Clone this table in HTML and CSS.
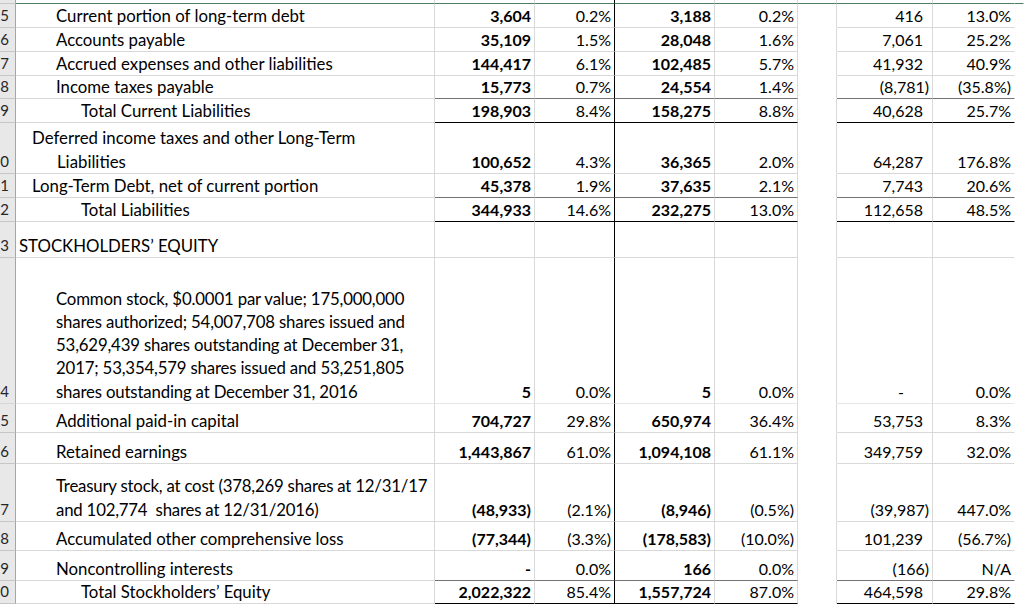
FILE: index.html
```html
<!DOCTYPE html>
<html lang="en">
<head>
<meta charset="utf-8">
<title>Balance Sheet</title>
<link rel="stylesheet" href="styles.css">
</head>
<body>
<div class="sheet">
  <div class="row top">
    <div class="c rh"></div><div class="c lab"></div><div class="c n"></div><div class="c p sep"></div><div class="c n"></div><div class="c p"></div><div class="c gap"></div><div class="c g"></div><div class="c h"></div><div class="c fill"></div>
  </div>
  <div class="row">
    <div class="c rh">5</div><div class="c lab i2">Current portion of long-term debt</div><div class="c n">3,604</div><div class="c p sep">0.2%</div><div class="c n">3,188</div><div class="c p">0.2%</div><div class="c gap"></div><div class="c g pos">416</div><div class="c h">13.0%</div><div class="c fill"></div>
  </div>
  <div class="row">
    <div class="c rh">6</div><div class="c lab i2">Accounts payable</div><div class="c n">35,109</div><div class="c p sep">1.5%</div><div class="c n">28,048</div><div class="c p">1.6%</div><div class="c gap"></div><div class="c g pos">7,061</div><div class="c h">25.2%</div><div class="c fill"></div>
  </div>
  <div class="row">
    <div class="c rh">7</div><div class="c lab i2">Accrued expenses and other liabilities</div><div class="c n">144,417</div><div class="c p sep">6.1%</div><div class="c n">102,485</div><div class="c p">5.7%</div><div class="c gap"></div><div class="c g pos">41,932</div><div class="c h">40.9%</div><div class="c fill"></div>
  </div>
  <div class="row pre">
    <div class="c rh">8</div><div class="c lab i2">Income taxes payable</div><div class="c n">15,773</div><div class="c p sep">0.7%</div><div class="c n">24,554</div><div class="c p">1.4%</div><div class="c gap"></div><div class="c g">(8,781)</div><div class="c h">(35.8%)</div><div class="c fill"></div>
  </div>
  <div class="row total">
    <div class="c rh">9</div><div class="c lab i3">Total Current Liabilities</div><div class="c n">198,903</div><div class="c p sep">8.4%</div><div class="c n">158,275</div><div class="c p">8.8%</div><div class="c gap"></div><div class="c g pos">40,628</div><div class="c h">25.7%</div><div class="c fill"></div>
  </div>
  <div class="row">
    <div class="c rh">0</div><div class="c lab i1"><div class="txt">Deferred income taxes and other Long-Term<br><span class="cont">Liabilities</span></div></div><div class="c n">100,652</div><div class="c p sep">4.3%</div><div class="c n">36,365</div><div class="c p">2.0%</div><div class="c gap"></div><div class="c g pos">64,287</div><div class="c h">176.8%</div><div class="c fill"></div>
  </div>
  <div class="row pre">
    <div class="c rh">1</div><div class="c lab i1">Long-Term Debt, net of current portion</div><div class="c n">45,378</div><div class="c p sep">1.9%</div><div class="c n">37,635</div><div class="c p">2.1%</div><div class="c gap"></div><div class="c g pos">7,743</div><div class="c h">20.6%</div><div class="c fill"></div>
  </div>
  <div class="row total">
    <div class="c rh">2</div><div class="c lab i3">Total Liabilities</div><div class="c n">344,933</div><div class="c p sep">14.6%</div><div class="c n">232,275</div><div class="c p">13.0%</div><div class="c gap"></div><div class="c g pos">112,658</div><div class="c h">48.5%</div><div class="c fill"></div>
  </div>
  <div class="row">
    <div class="c rh">3</div><div class="c lab i0">STOCKHOLDERS’ EQUITY</div><div class="c n"></div><div class="c p sep"></div><div class="c n"></div><div class="c p"></div><div class="c gap"></div><div class="c g"></div><div class="c h"></div><div class="c fill"></div>
  </div>
  <div class="row soft">
    <div class="c rh">4</div><div class="c lab i2"><div class="txt tight">Common stock, $0.0001 par value; 175,000,000<br>shares authorized; 54,007,708 shares issued and<br>53,629,439 shares outstanding at December 31,<br>2017; 53,354,579 shares issued and 53,251,805<br>shares outstanding at December 31, 2016</div></div><div class="c n">5</div><div class="c p sep">0.0%</div><div class="c n">5</div><div class="c p">0.0%</div><div class="c gap"></div><div class="c g dash">-</div><div class="c h">0.0%</div><div class="c fill"></div>
  </div>
  <div class="row">
    <div class="c rh">5</div><div class="c lab i2">Additional paid-in capital</div><div class="c n">704,727</div><div class="c p sep">29.8%</div><div class="c n">650,974</div><div class="c p">36.4%</div><div class="c gap"></div><div class="c g pos">53,753</div><div class="c h">8.3%</div><div class="c fill"></div>
  </div>
  <div class="row">
    <div class="c rh">6</div><div class="c lab i2">Retained earnings</div><div class="c n">1,443,867</div><div class="c p sep">61.0%</div><div class="c n">1,094,108</div><div class="c p">61.1%</div><div class="c gap"></div><div class="c g pos">349,759</div><div class="c h">32.0%</div><div class="c fill"></div>
  </div>
  <div class="row">
    <div class="c rh">7</div><div class="c lab i2"><div class="txt tighter">Treasury stock, at cost (378,269 shares at 12/31/17<br>and 102,774&nbsp; shares at 12/31/2016)</div></div><div class="c n">(48,933)</div><div class="c p sep">(2.1%)</div><div class="c n">(8,946)</div><div class="c p">(0.5%)</div><div class="c gap"></div><div class="c g">(39,987)</div><div class="c h">447.0%</div><div class="c fill"></div>
  </div>
  <div class="row">
    <div class="c rh">8</div><div class="c lab i2">Accumulated other comprehensive loss</div><div class="c n">(77,344)</div><div class="c p sep">(3.3%)</div><div class="c n">(178,583)</div><div class="c p">(10.0%)</div><div class="c gap"></div><div class="c g pos">101,239</div><div class="c h">(56.7%)</div><div class="c fill"></div>
  </div>
  <div class="row pre">
    <div class="c rh">9</div><div class="c lab i2">Noncontrolling interests</div><div class="c n">-</div><div class="c p sep">0.0%</div><div class="c n">166</div><div class="c p">0.0%</div><div class="c gap"></div><div class="c g">(166)</div><div class="c h">N/A</div><div class="c fill"></div>
  </div>
  <div class="row total">
    <div class="c rh">0</div><div class="c lab i3">Total Stockholders’ Equity</div><div class="c n">2,022,322</div><div class="c p sep">85.4%</div><div class="c n">1,557,724</div><div class="c p">87.0%</div><div class="c gap"></div><div class="c g pos">464,598</div><div class="c h">29.8%</div><div class="c fill"></div>
  </div>
</div>
</body>
</html>
```

FILE: styles.css
```css
html, body {
  margin: 0;
  padding: 0;
  background: #ffffff;
  overflow: hidden;
}

.sheet {
  display: grid;
  width: 1024px;
  grid-template-columns: 16px 419px 100px 80px 100px 83px 39px 96px 82px 9px;
  grid-template-rows: 4px 24px 24px 24px 23px 24px 51px 24px 24px 36px 146px 29px 31px 58px 29px 30px 23px;
  font-family: Lato, "Liberation Sans", sans-serif;
  font-size: 16px;
  color: #000000;
}

.row {
  display: contents;
}

.c {
  box-sizing: border-box;
  display: flex;
  align-items: flex-end;
  line-height: 23px;
  white-space: nowrap;
  overflow: hidden;
  border-right: 1px solid #d9d9d9;
  border-bottom: 1px solid #d9d9d9;
}

/* row header */
.rh {
  background: #e8e8e8;
  border-right-color: #a6a6a6;
  border-bottom-color: #c6c6c6;
  justify-content: flex-end;
  padding-right: 6px;
  font-size: 15px;
  color: #262626;
}

/* label column */
.lab {
  font-size: 16.8px;
  padding-left: 3px;
}
.i0 { padding-left: 3px; }
.i1 { padding-left: 16px; }
.i2 { padding-left: 40px; }
.i3 { padding-left: 65px; }
.txt {
  line-height: 23.3px;
}
.tight { letter-spacing: -0.17px; }
.tighter { letter-spacing: -0.2px; }
.cont {
  padding-left: 25px;
}

/* numbers */
.n, .p, .g, .h {
  justify-content: flex-end;
  padding-right: 3px;
}
.n { font-weight: 700; }
.sep { border-right-color: #000000; }
.g.pos { padding-right: 9px; }
.g.dash { padding-right: 28px; }
.h { border-right-color: transparent; }

.gap {
  border-bottom-color: transparent;
}
.fill {
  border-right-color: transparent;
  border-bottom-color: transparent;
}

/* top strip */
.top .c { border-bottom-color: #527c61; }
.top .rh { border-bottom-color: #c6c6c6; }

/* lines above and below totals */
.pre .n, .pre .p, .pre .g, .pre .h { border-bottom-color: #737373; }
.total .n, .total .p, .total .g, .total .h { border-bottom-color: #000000; }

.soft .c { border-bottom-color: #e6e6e6; }
.soft .rh { border-bottom-color: #d6d6d6; }
.soft .gap, .soft .fill { border-bottom-color: transparent; }
```
